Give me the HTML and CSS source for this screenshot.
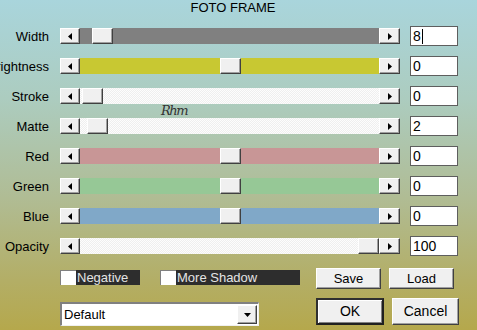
FILE: index.html
```html
<!DOCTYPE html>
<html>
<head>
<meta charset="utf-8">
<link rel="stylesheet" href="styles.css">
</head>
<body>
<div class="dialog">
  <div class="title">FOTO FRAME</div>
  <div class="rows">
    <div class="row">
      <span class="label">Width</span>
      <div class="slider">
        <span class="arrow-btn"><svg width="4" height="7" viewBox="0 0 4 7"><polygon points="4,0 4,7 0,3.5" fill="#000"/></svg></span>
        <div class="track track-gray"><span class="thumb" style="margin-left:12px"></span></div>
        <span class="arrow-btn wide"><svg width="4" height="7" viewBox="0 0 4 7"><polygon points="0,0 0,7 4,3.5" fill="#000"/></svg></span>
      </div>
      <div class="field">8<span class="caret"></span></div>
    </div>
    <div class="row">
      <span class="label">Brightness</span>
      <div class="slider">
        <span class="arrow-btn"><svg width="4" height="7" viewBox="0 0 4 7"><polygon points="4,0 4,7 0,3.5" fill="#000"/></svg></span>
        <div class="track track-yellow"><span class="thumb" style="margin-left:140px"></span></div>
        <span class="arrow-btn wide"><svg width="4" height="7" viewBox="0 0 4 7"><polygon points="0,0 0,7 4,3.5" fill="#000"/></svg></span>
      </div>
      <div class="field">0</div>
    </div>
    <div class="row">
      <span class="label">Stroke</span>
      <div class="slider">
        <span class="arrow-btn"><svg width="4" height="7" viewBox="0 0 4 7"><polygon points="4,0 4,7 0,3.5" fill="#000"/></svg></span>
        <div class="track track-white"><span class="thumb" style="margin-left:2px"></span></div>
        <span class="arrow-btn wide"><svg width="4" height="7" viewBox="0 0 4 7"><polygon points="0,0 0,7 4,3.5" fill="#000"/></svg></span>
      </div>
      <div class="field">0</div>
    </div>
    <div class="row">
      <span class="label">Matte</span>
      <div class="slider">
        <span class="arrow-btn"><svg width="4" height="7" viewBox="0 0 4 7"><polygon points="4,0 4,7 0,3.5" fill="#000"/></svg></span>
        <div class="track track-white"><span class="thumb" style="margin-left:7px"></span></div>
        <span class="arrow-btn wide"><svg width="4" height="7" viewBox="0 0 4 7"><polygon points="0,0 0,7 4,3.5" fill="#000"/></svg></span>
      </div>
      <div class="field">2</div>
    </div>
    <div class="row">
      <span class="label">Red</span>
      <div class="slider">
        <span class="arrow-btn"><svg width="4" height="7" viewBox="0 0 4 7"><polygon points="4,0 4,7 0,3.5" fill="#000"/></svg></span>
        <div class="track track-red"><span class="thumb" style="margin-left:140px"></span></div>
        <span class="arrow-btn wide"><svg width="4" height="7" viewBox="0 0 4 7"><polygon points="0,0 0,7 4,3.5" fill="#000"/></svg></span>
      </div>
      <div class="field">0</div>
    </div>
    <div class="row">
      <span class="label">Green</span>
      <div class="slider">
        <span class="arrow-btn"><svg width="4" height="7" viewBox="0 0 4 7"><polygon points="4,0 4,7 0,3.5" fill="#000"/></svg></span>
        <div class="track track-green"><span class="thumb" style="margin-left:140px"></span></div>
        <span class="arrow-btn wide"><svg width="4" height="7" viewBox="0 0 4 7"><polygon points="0,0 0,7 4,3.5" fill="#000"/></svg></span>
      </div>
      <div class="field">0</div>
    </div>
    <div class="row">
      <span class="label">Blue</span>
      <div class="slider">
        <span class="arrow-btn"><svg width="4" height="7" viewBox="0 0 4 7"><polygon points="4,0 4,7 0,3.5" fill="#000"/></svg></span>
        <div class="track track-blue"><span class="thumb" style="margin-left:140px"></span></div>
        <span class="arrow-btn wide"><svg width="4" height="7" viewBox="0 0 4 7"><polygon points="0,0 0,7 4,3.5" fill="#000"/></svg></span>
      </div>
      <div class="field">0</div>
    </div>
    <div class="row">
      <span class="label">Opacity</span>
      <div class="slider">
        <span class="arrow-btn"><svg width="4" height="7" viewBox="0 0 4 7"><polygon points="4,0 4,7 0,3.5" fill="#000"/></svg></span>
        <div class="track track-white"><span class="thumb" style="margin-left:278px"></span></div>
        <span class="arrow-btn wide"><svg width="4" height="7" viewBox="0 0 4 7"><polygon points="0,0 0,7 4,3.5" fill="#000"/></svg></span>
      </div>
      <div class="field">100</div>
    </div>
  </div>
  <div class="bottom">
    <div class="bottom-left">
      <div class="checks">
        <label class="check"><span class="box"></span><span class="check-text">Negative</span></label>
        <label class="check"><span class="box"></span><span class="check-text wide-text">More Shadow</span></label>
      </div>
      <div class="select">
        <span class="select-value">Default</span>
        <span class="select-btn"><svg width="7" height="4" viewBox="0 0 7 4"><polygon points="0,0 7,0 3.5,4" fill="#000"/></svg></span>
      </div>
    </div>
    <div class="bottom-right">
      <div class="btn-row top-btns">
        <span class="btn btn-small">Save</span>
        <span class="btn btn-small">Load</span>
      </div>
      <div class="btn-row">
        <span class="btn btn-big btn-default">OK</span>
        <span class="btn btn-big btn-cancel">Cancel</span>
      </div>
    </div>
  </div>
  <span class="watermark">Rhm</span>
</div>
</body>
</html>
```

FILE: styles.css
```css
* { box-sizing: border-box; }
html, body { margin: 0; padding: 0; }
body {
  font-family: "Liberation Sans", Arial, sans-serif;
  font-size: 13px;
  color: #000;
}
.dialog {
  position: relative;
  width: 477px;
  height: 330px;
  overflow: hidden;
  background: linear-gradient(180deg, #a9d5dc 0%, #acccbf 30%, #b0bc94 60%, #b3ae66 85%, #b5a84c 100%);
}
.title {
  height: 21px;
  line-height: 15px;
  text-align: center;
  padding-right: 11px;
}
.rows { display: flex; flex-direction: column; }
.row {
  display: grid;
  grid-template-columns: 50px 340px 48px;
  column-gap: 10px;
  height: 30px;
  align-items: center;
}
.label {
  display: flex;
  justify-content: flex-end;
  white-space: nowrap;
  line-height: 15px;
  padding-right: 1px;
}
.slider {
  display: flex;
  height: 16px;
}
.arrow-btn {
  width: 20px;
  height: 16px;
  flex: none;
  display: flex;
  align-items: center;
  justify-content: center;
  background: #f0f0f0;
  border-top: 1px solid #fff;
  border-left: 1px solid #fff;
  border-right: 1px solid #404040;
  border-bottom: 1px solid #404040;
  box-shadow: inset -1px -1px 0 #a0a0a0;
}
.arrow-btn.wide { width: 21px; }
.track {
  flex: 1;
  display: flex;
  align-items: stretch;
}
.track-gray { background: #808080; }
.track-yellow { background: #c8c832; }
.track-red { background: #c89696; }
.track-green { background: #96c896; }
.track-blue { background: #80a8c8; }
.track-white {
  background: repeating-conic-gradient(#efefef 0 25%, #fdfdfd 0 50%) 0 0 / 2px 2px;
}
.thumb {
  width: 21px;
  flex: none;
  background: #f0f0f0;
  border-top: 1px solid #fff;
  border-left: 1px solid #fff;
  border-right: 1px solid #404040;
  border-bottom: 1px solid #404040;
  box-shadow: inset -1px -1px 0 #a0a0a0;
}
.field {
  height: 20px;
  background: #fff;
  border: 1px solid #5e5e5e;
  font-size: 14px;
  line-height: 18px;
  padding-left: 2px;
  display: flex;
  align-items: center;
}
.caret {
  display: inline-block;
  width: 1px;
  height: 15px;
  background: #000;
  margin-left: 1px;
}
.bottom {
  display: flex;
  padding-left: 60px;
}
.bottom-left {
  width: 256px;
  padding-top: 9px;
  display: flex;
  flex-direction: column;
  gap: 17px;
}
.checks { display: flex; gap: 20px; }
.check { display: flex; height: 15px; }
.box {
  width: 16px;
  height: 15px;
  background: #fff;
  border-top: 1px solid #808080;
  border-left: 1px solid #808080;
}
.check-text {
  width: 64px;
  background: #2d2d2d;
  color: #e4e4e4;
  line-height: 15px;
  padding-left: 1px;
}
.check-text.wide-text { width: 124px; }
.select {
  width: 199px;
  height: 24px;
  display: flex;
  align-items: center;
  background: #fff;
  border-top: 2px solid #808080;
  border-left: 2px solid #808080;
  border-right: 1px solid #f0f0f0;
  border-bottom: 1px solid #f0f0f0;
  padding: 1px 1px 1px 2px;
}
.select-value { flex: 1; line-height: 15px; }
.select-btn {
  width: 20px;
  height: 19px;
  display: flex;
  align-items: center;
  justify-content: center;
  background: #f0f0f0;
  border-top: 1px solid #fff;
  border-left: 1px solid #fff;
  border-right: 1px solid #404040;
  border-bottom: 1px solid #404040;
  box-shadow: inset -1px -1px 0 #a0a0a0;
}
.bottom-right {
  padding-top: 7px;
  display: flex;
  flex-direction: column;
  gap: 9px;
}
.btn-row { display: flex; gap: 8px; }
.btn {
  display: flex;
  align-items: center;
  justify-content: center;
  background: #f0f0f0;
  border-top: 1px solid #fff;
  border-left: 1px solid #fff;
  border-right: 1px solid #404040;
  border-bottom: 1px solid #404040;
  box-shadow: inset -1px -1px 0 #a0a0a0;
  line-height: 15px;
}
.btn-small { width: 65px; height: 21px; }
.btn-big { height: 27px; font-size: 14px; }
.btn-default {
  width: 68px;
  border: 2px solid #202020;
  border-top-color: #303030;
  border-left-color: #303030;
  box-shadow: inset 1px 1px 0 #fff, inset -1px -1px 0 #808080;
}
.btn-cancel { width: 67px; }
.watermark {
  position: absolute;
  left: 161px;
  top: 103px;
  font-family: "DejaVu Serif", serif;
  font-style: italic;
  font-size: 13px;
  color: #333;
  letter-spacing: -1.5px;
}
```
